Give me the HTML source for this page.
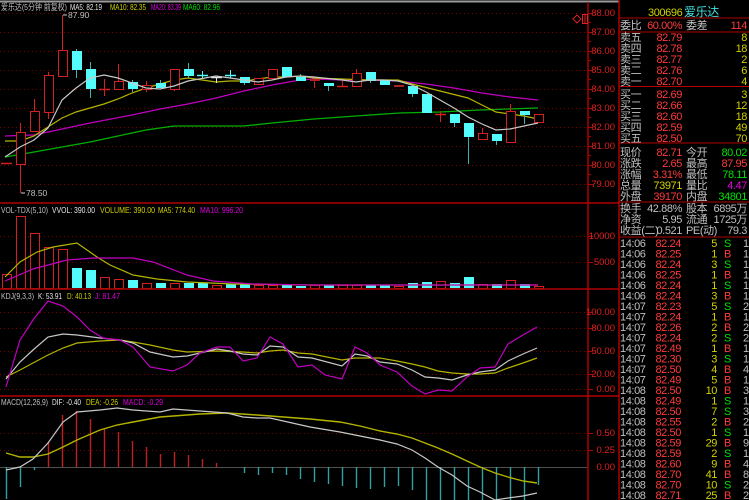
<!DOCTYPE html>
<html><head><meta charset="utf-8"><style>
html,body{margin:0;padding:0;background:#000;width:749px;height:500px;overflow:hidden}
svg{display:block}
text{font-family:"Liberation Sans","Noto Sans CJK SC",sans-serif}
.h{font-size:8.5px}
.ax{font-size:9.5px;fill:#e02020;text-anchor:end}
.p{font-size:11px;letter-spacing:-0.4px}
.e{text-anchor:end}
.g{fill:#c0c0c0}.r{fill:#ff3b3b}.y{fill:#d2d200}.gr{fill:#00e000}.m{fill:#e000e0}.c{fill:#40e0e0}.w{fill:#e8e8e8}
</style></head><body>
<svg id="s" width="749" height="500" xmlns="http://www.w3.org/2000/svg">
<line x1="0" y1="1.5" x2="619" y2="1.5" stroke="#9a9a9a" stroke-width="2"/>
<g id="grid" stroke="#7a0000" stroke-dasharray="1,3" stroke-width="1"></g>
<line x1="0" y1="467.5" x2="588" y2="467.5" stroke="#505050"/>
<g id="chart"></g>
<g stroke="#b00000" stroke-width="1.5">
<line x1="0" y1="203" x2="619" y2="203"/>
<line x1="0" y1="289" x2="619" y2="289"/>
<line x1="0" y1="396" x2="619" y2="396"/>
<line x1="588" y1="2" x2="588" y2="500"/>
<line x1="619" y1="0" x2="619" y2="500"/>
</g>
<g stroke="#b00000" id="ticks"></g>
<path d="M573 19 L577 15 L581 19 L577 23 Z" fill="none" stroke="#e02020"/>
<rect x="582.5" y="14.5" width="5" height="9" fill="none" stroke="#e02020"/>
<line x1="585" y1="15" x2="585" y2="23" stroke="#e02020"/>
<!-- headers -->
<g class="h">
<text x="1" y="10" class="g" textLength="66" lengthAdjust="spacingAndGlyphs">爱乐达(5分钟 前复权)</text>
<text x="70" y="10" class="w" textLength="32" lengthAdjust="spacingAndGlyphs">MA5: 82.19</text>
<text x="110" y="10" class="y" textLength="36" lengthAdjust="spacingAndGlyphs">MA10: 82.35</text>
<text x="151" y="10" class="m" textLength="30" lengthAdjust="spacingAndGlyphs">MA20: 83.39</text>
<text x="183" y="10" class="gr" textLength="37" lengthAdjust="spacingAndGlyphs">MA60: 82.96</text>
<text x="1" y="213" class="g" textLength="47" lengthAdjust="spacingAndGlyphs">VOL-TDX(5,10)</text>
<text x="52" y="213" class="w" textLength="43" lengthAdjust="spacingAndGlyphs">VVOL: 390.00</text>
<text x="100" y="213" class="y" textLength="55" lengthAdjust="spacingAndGlyphs">VOLUME: 390.00</text>
<text x="158" y="213" class="y" textLength="37" lengthAdjust="spacingAndGlyphs">MA5: 774.40</text>
<text x="200" y="213" class="m" textLength="43" lengthAdjust="spacingAndGlyphs">MA10: 996.20</text>
<text x="1" y="299" class="g" textLength="33" lengthAdjust="spacingAndGlyphs">KDJ(9,3,3)</text>
<text x="38" y="299" class="w" textLength="24" lengthAdjust="spacingAndGlyphs">K: 53.91</text>
<text x="67" y="299" class="y" textLength="24" lengthAdjust="spacingAndGlyphs">D: 40.13</text>
<text x="95" y="299" class="m" textLength="25" lengthAdjust="spacingAndGlyphs">J: 81.47</text>
<text x="1" y="405" class="g" textLength="47" lengthAdjust="spacingAndGlyphs">MACD(12,26,9)</text>
<text x="52" y="405" class="w" textLength="29" lengthAdjust="spacingAndGlyphs">DIF: -0.40</text>
<text x="86" y="405" class="y" textLength="32" lengthAdjust="spacingAndGlyphs">DEA: -0.26</text>
<text x="123" y="405" class="m" textLength="40" lengthAdjust="spacingAndGlyphs">MACD: -0.29</text>
</g>
<text class="h g" x="68" y="18">87.90</text>
<line x1="63" y1="15" x2="67" y2="15" stroke="#ccc"/>
<text class="h g" x="26" y="196">78.50</text>
<line x1="21" y1="193" x2="25" y2="193" stroke="#ccc"/>
<text class="ax" x="615" y="16">88.00</text><text class="ax" x="615" y="35">87.00</text><text class="ax" x="615" y="54">86.00</text><text class="ax" x="615" y="73">85.00</text><text class="ax" x="615" y="92">84.00</text><text class="ax" x="615" y="111">83.00</text><text class="ax" x="615" y="130">82.00</text><text class="ax" x="615" y="149">81.00</text><text class="ax" x="615" y="168">80.00</text><text class="ax" x="615" y="187">79.00</text>
<text class="ax" x="615" y="239">10000</text><text class="ax" x="615" y="265">5000</text>
<text class="ax" x="615" y="315">100.00</text><text class="ax" x="615" y="331">80.00</text><text class="ax" x="615" y="354">50.00</text><text class="ax" x="615" y="377">20.00</text><text class="ax" x="615" y="392">0.00</text>
<text class="ax" x="615" y="436">0.50</text><text class="ax" x="615" y="453">0.25</text><text class="ax" x="615" y="470">0.00</text>
<g stroke="#b00000" stroke-width="1">
<line x1="619" y1="18" x2="749" y2="18"/><line x1="619" y1="32" x2="749" y2="32"/><line x1="619" y1="86.5" x2="749" y2="86.5"/><line x1="619" y1="143" x2="749" y2="143"/><line x1="619" y1="202" x2="749" y2="202"/><line x1="619" y1="237" x2="749" y2="237"/>
</g>
<g class="p">
<text x="648" y="16" class="y">300696</text><text x="684" y="16" class="c" style="font-size:12px">爱乐达</text>
<text x="620" y="29" class="g">委比</text><text x="682" y="29" class="r e">60.00%</text><text x="686" y="29" class="g">委差</text><text x="747" y="29" class="r e">114</text>
<text x="620" y="156" class="g">现价</text><text x="682" y="156" class="r e">82.71</text><text x="686" y="156" class="g">今开</text><text x="747" y="156" class="gr e">80.02</text>
<text x="620" y="167" class="g">涨跌</text><text x="682" y="167" class="r e">2.65</text><text x="686" y="167" class="g">最高</text><text x="747" y="167" class="r e">87.95</text>
<text x="620" y="178" class="g">涨幅</text><text x="682" y="178" class="r e">3.31%</text><text x="686" y="178" class="g">最低</text><text x="747" y="178" class="gr e">78.11</text>
<text x="620" y="189" class="g">总量</text><text x="682" y="189" class="y e">73971</text><text x="686" y="189" class="g">量比</text><text x="747" y="189" class="m e">4.47</text>
<text x="620" y="200" class="g">外盘</text><text x="682" y="200" class="r e">39170</text><text x="686" y="200" class="g">内盘</text><text x="747" y="200" class="gr e">34801</text>
<text x="620" y="212" class="g">换手</text><text x="682" y="212" class="g e">42.88%</text><text x="686" y="212" class="g">股本</text><text x="747" y="212" class="g e">6895万</text>
<text x="620" y="223" class="g">净资</text><text x="682" y="223" class="g e">5.95</text><text x="686" y="223" class="g">流通</text><text x="747" y="223" class="g e">1725万</text>
<text x="620" y="234" class="g">收益(二)</text><text x="682" y="234" class="g e">0.521</text><text x="686" y="234" class="g">PE(动)</text><text x="747" y="234" class="g e">79.3</text>
<text x="620" y="41" class="g">卖五</text><text x="682" y="41" class="r e">82.79</text><text x="747" y="41" class="y e">8</text>
<text x="620" y="52" class="g">卖四</text><text x="682" y="52" class="r e">82.78</text><text x="747" y="52" class="y e">18</text>
<text x="620" y="63" class="g">卖三</text><text x="682" y="63" class="r e">82.77</text><text x="747" y="63" class="y e">2</text>
<text x="620" y="74" class="g">卖二</text><text x="682" y="74" class="r e">82.76</text><text x="747" y="74" class="y e">6</text>
<text x="620" y="85" class="g">卖一</text><text x="682" y="85" class="r e">82.70</text><text x="747" y="85" class="y e">4</text>
<text x="620" y="98" class="g">买一</text><text x="682" y="98" class="r e">82.69</text><text x="747" y="98" class="y e">3</text>
<text x="620" y="109" class="g">买二</text><text x="682" y="109" class="r e">82.66</text><text x="747" y="109" class="y e">12</text>
<text x="620" y="120" class="g">买三</text><text x="682" y="120" class="r e">82.60</text><text x="747" y="120" class="y e">18</text>
<text x="620" y="131" class="g">买四</text><text x="682" y="131" class="r e">82.59</text><text x="747" y="131" class="y e">49</text>
<text x="620" y="142" class="g">买五</text><text x="682" y="142" class="r e">82.50</text><text x="747" y="142" class="y e">70</text>
</g>
<g class="p">
<text x="620" y="247" class="g">14:06</text><text x="681" y="247" class="r e">82.24</text><text x="717" y="247" class="y e">5</text><text x="724" y="247" class="gr">S</text><text x="743" y="247" class="g">1</text>
<text x="620" y="257.5" class="g">14:06</text><text x="681" y="257.5" class="r e">82.25</text><text x="717" y="257.5" class="y e">1</text><text x="724" y="257.5" class="r">B</text><text x="743" y="257.5" class="g">1</text>
<text x="620" y="268" class="g">14:06</text><text x="681" y="268" class="r e">82.24</text><text x="717" y="268" class="y e">3</text><text x="724" y="268" class="gr">S</text><text x="743" y="268" class="g">1</text>
<text x="620" y="278.5" class="g">14:06</text><text x="681" y="278.5" class="r e">82.25</text><text x="717" y="278.5" class="y e">1</text><text x="724" y="278.5" class="r">B</text><text x="743" y="278.5" class="g">1</text>
<text x="620" y="289" class="g">14:06</text><text x="681" y="289" class="r e">82.24</text><text x="717" y="289" class="y e">1</text><text x="724" y="289" class="gr">S</text><text x="743" y="289" class="g">1</text>
<text x="620" y="299.5" class="g">14:06</text><text x="681" y="299.5" class="r e">82.24</text><text x="717" y="299.5" class="y e">3</text><text x="724" y="299.5" class="r">B</text><text x="743" y="299.5" class="g">1</text>
<text x="620" y="310" class="g">14:07</text><text x="681" y="310" class="r e">82.23</text><text x="717" y="310" class="y e">5</text><text x="724" y="310" class="gr">S</text><text x="743" y="310" class="g">2</text>
<text x="620" y="320.5" class="g">14:07</text><text x="681" y="320.5" class="r e">82.24</text><text x="717" y="320.5" class="y e">1</text><text x="724" y="320.5" class="r">B</text><text x="743" y="320.5" class="g">1</text>
<text x="620" y="331" class="g">14:07</text><text x="681" y="331" class="r e">82.26</text><text x="717" y="331" class="y e">2</text><text x="724" y="331" class="r">B</text><text x="743" y="331" class="g">2</text>
<text x="620" y="341.5" class="g">14:07</text><text x="681" y="341.5" class="r e">82.24</text><text x="717" y="341.5" class="y e">2</text><text x="724" y="341.5" class="gr">S</text><text x="743" y="341.5" class="g">2</text>
<text x="620" y="352" class="g">14:07</text><text x="681" y="352" class="r e">82.49</text><text x="717" y="352" class="y e">1</text><text x="724" y="352" class="r">B</text><text x="743" y="352" class="g">1</text>
<text x="620" y="362.5" class="g">14:07</text><text x="681" y="362.5" class="r e">82.30</text><text x="717" y="362.5" class="y e">3</text><text x="724" y="362.5" class="gr">S</text><text x="743" y="362.5" class="g">1</text>
<text x="620" y="373" class="g">14:07</text><text x="681" y="373" class="r e">82.50</text><text x="717" y="373" class="y e">4</text><text x="724" y="373" class="r">B</text><text x="743" y="373" class="g">4</text>
<text x="620" y="383.5" class="g">14:07</text><text x="681" y="383.5" class="r e">82.49</text><text x="717" y="383.5" class="y e">5</text><text x="724" y="383.5" class="r">B</text><text x="743" y="383.5" class="g">1</text>
<text x="620" y="394" class="g">14:08</text><text x="681" y="394" class="r e">82.50</text><text x="717" y="394" class="y e">10</text><text x="724" y="394" class="r">B</text><text x="743" y="394" class="g">3</text>
<text x="620" y="404.5" class="g">14:08</text><text x="681" y="404.5" class="r e">82.49</text><text x="717" y="404.5" class="y e">1</text><text x="724" y="404.5" class="gr">S</text><text x="743" y="404.5" class="g">1</text>
<text x="620" y="415" class="g">14:08</text><text x="681" y="415" class="r e">82.50</text><text x="717" y="415" class="y e">7</text><text x="724" y="415" class="gr">S</text><text x="743" y="415" class="g">3</text>
<text x="620" y="425.5" class="g">14:08</text><text x="681" y="425.5" class="r e">82.55</text><text x="717" y="425.5" class="y e">2</text><text x="724" y="425.5" class="r">B</text><text x="743" y="425.5" class="g">2</text>
<text x="620" y="436" class="g">14:08</text><text x="681" y="436" class="r e">82.50</text><text x="717" y="436" class="y e">1</text><text x="724" y="436" class="gr">S</text><text x="743" y="436" class="g">1</text>
<text x="620" y="446.5" class="g">14:08</text><text x="681" y="446.5" class="r e">82.59</text><text x="717" y="446.5" class="y e">29</text><text x="724" y="446.5" class="r">B</text><text x="743" y="446.5" class="g">9</text>
<text x="620" y="457" class="g">14:08</text><text x="681" y="457" class="r e">82.59</text><text x="717" y="457" class="y e">2</text><text x="724" y="457" class="gr">S</text><text x="743" y="457" class="g">1</text>
<text x="620" y="467.5" class="g">14:08</text><text x="681" y="467.5" class="r e">82.60</text><text x="717" y="467.5" class="y e">9</text><text x="724" y="467.5" class="r">B</text><text x="743" y="467.5" class="g">4</text>
<text x="620" y="478" class="g">14:08</text><text x="681" y="478" class="r e">82.70</text><text x="717" y="478" class="y e">41</text><text x="724" y="478" class="r">B</text><text x="743" y="478" class="g">8</text>
<text x="620" y="488.5" class="g">14:08</text><text x="681" y="488.5" class="r e">82.70</text><text x="717" y="488.5" class="y e">10</text><text x="724" y="488.5" class="gr">S</text><text x="743" y="488.5" class="g">2</text>
<text x="620" y="499" class="g">14:08</text><text x="681" y="499" class="r e">82.71</text><text x="717" y="499" class="y e">25</text><text x="724" y="499" class="r">B</text><text x="743" y="499" class="g">2</text>
</g>
</svg>
<script>
var NS="http://www.w3.org/2000/svg";
function el(p,t,a){var e=document.createElementNS(NS,t);for(var k in a)e.setAttribute(k,a[k]);p.appendChild(e);return e;}
var grid=document.getElementById('grid'),ch=document.getElementById('chart'),tk=document.getElementById('ticks');
[13,32,51,70,89,108,127,146,165,184,236,262,312,328,351,374,389,433,450].forEach(function(y){el(grid,'line',{x1:0,y1:y+.5,x2:588,y2:y+.5});el(tk,'line',{x1:588,y1:y+.5,x2:593,y2:y+.5});});
[22.5,41.5,60.5,79.5,98.5,117.5,136.5,155.5,174.5].forEach(function(y){el(tk,'line',{x1:588,y1:y,x2:591,y2:y});});
var RED="#d42020",CY="#54fcfc";
var C=[[6,163,163,163,163,'x'],[20,132,164,123,193,'r'],[34,111,131,99,131,'r'],[48,75,112,72,119,'r'],[62,50,76,15,76,'r'],[76,51,70,49,78,'c'],[90,69,89,62,98,'c'],[104,89,89,79,96,'x'],[118,81,89,64,89,'r'],[132,82,89,80,92,'c'],[146,85,89,81,92,'r'],[160,83,88,80,88,'c'],[174,69,89,69,91,'r'],[188,69,76,63,78,'c'],[202,75,75,71,79,'cx'],[216,77,77,77,83,'w'],[230,75,75,70,78,'cx'],[244,77,83,77,85,'c'],[258,78,84,78,84,'r'],[272,69,78,69,78,'r'],[286,67,77,67,77,'c'],[300,77,81,74,81,'c'],[314,79,81,79,88,'f'],[328,83,86,83,91,'c'],[342,86,86,81,86,'x'],[356,73,86,69,86,'r'],[370,72,81,72,83,'c'],[384,80,85,80,85,'c'],[398,85,87,85,87,'f'],[412,86,94,86,97,'c'],[426,94,113,94,113,'c'],[440,114,114,111,122,'x'],[454,114,123,114,127,'c'],[468,123,137,123,164,'c'],[482,133,139,128,139,'r'],[496,134,141,134,145,'c'],[510,111,142,104,142,'r'],[524,111,115,111,124,'c'],[538,114,122,114,122,'r']];
var V=[274,216,233,247,249,268,270,277,279,280,283,283,283,283,283,285,284,284,285,285,285,286,285,285,285,285,285,285,286,283,282,281,283,277,284,284,280,284,286];
function poly(pts,col,w){el(ch,'polyline',{points:pts.map(function(p){return p.join(',')}).join(' '),fill:'none',stroke:col,'stroke-width':w||1});}
poly([[5,136],[34,135],[48,132],[90,123],[132,115],[160,109],[188,104],[216,98],[244,91],[272,85],[300,80],[314,79],[342,80],[370,80],[398,81],[426,84],[454,88],[482,93],[510,97],[538,100]],'#c000c0',1.3);
poly([[5,157],[34,152],[62,147],[90,142],[118,136],[146,130],[174,126],[200,126],[244,126],[272,123],[314,119],[370,115],[400,113],[440,112],[480,110],[538,108]],'#00b000',1.3);
poly([[5,141],[20,141],[34,136],[48,127],[62,118],[76,112],[90,108],[104,104],[118,99],[132,93],[146,88],[160,84],[174,80],[188,78],[202,80],[216,82],[230,81],[244,81],[258,79],[272,77],[286,77],[300,76],[314,78],[342,79],[370,80],[384,80],[398,80],[412,84],[440,91],[468,98],[482,105],[496,112],[510,114],[524,116],[538,119]],'#b4b400',1.2);
C.forEach(function(c){var x=c[0],t=c[1],b=c[2],wt=c[3],wb=c[4],k=c[5];
 var col=(k=='c'||k=='cx')?CY:(k=='w'?'#e0e0e0':RED);
 el(ch,'line',{x1:x+.5,y1:wt,x2:x+.5,y2:wb,stroke:(k=='c'?'#40b0b0':col)});
 if(k=='c')el(ch,'rect',{x:x-4,y:t,width:10,height:Math.max(b-t,1),fill:CY});
 else if(k=='r')el(ch,'rect',{x:x-4+.5,y:t+.5,width:9,height:b-t,fill:'#000',stroke:RED});
 else if(k=='f')el(ch,'rect',{x:x-4,y:t,width:10,height:Math.max(b-t,2),fill:'#b02020'});
 else el(ch,'line',{x1:x-5,y1:t+.5,x2:x+6,y2:t+.5,stroke:col,'stroke-width':1.5});
});
poly([[5,157],[20,147],[34,140],[48,128],[62,100],[76,88],[90,78],[104,75],[118,78],[132,83],[146,88],[160,89],[174,86],[188,81],[216,76],[244,80],[258,82],[272,80],[286,77],[300,76],[314,77],[342,80],[356,82],[370,80],[384,80],[398,81],[412,85],[426,92],[440,100],[454,108],[468,117],[482,124],[496,130],[510,129],[524,126],[538,123]],'#c8c8c8',1.2);
C.forEach(function(c,i){var x=c[0],t=V[i],k=c[5];
 if(k=='c'||k=='cx')el(ch,'rect',{x:x-4,y:t,width:10,height:288-t,fill:CY});
 else el(ch,'rect',{x:x-4+.5,y:t+.5,width:9,height:288-t,fill:'#000',stroke:RED});});
poly([[5,277],[20,262],[37,252],[53,247],[77,243],[97,257],[110,265],[133,275],[157,279],[187,282],[233,284],[310,285],[400,285],[538,285]],'#b4b400',1.2);
poly([[5,281],[33,269],[67,260],[93,258],[133,258],[153,262],[187,275],[213,281],[253,284],[310,285],[420,285],[538,285]],'#c000c0',1.2);
poly([[6,377],[20,370],[33,363],[48,355],[63,348],[77,343],[100,341],[120,340],[133,342],[150,345],[173,350],[187,352],[217,351],[243,352],[257,353],[270,351],[283,350],[298,353],[312,354],[342,360],[355,358],[367,358],[380,358],[397,361],[412,364],[425,367],[438,371],[452,373],[467,374],[480,374],[495,373],[508,368],[523,363],[537,358]],'#b4b400',1.2);
poly([[6,379],[20,362],[33,350],[48,337],[63,334],[77,335],[100,338],[120,340],[133,343],[150,352],[173,357],[187,356],[217,349],[230,351],[243,354],[257,355],[270,346],[283,347],[298,357],[312,358],[342,366],[355,354],[367,356],[380,362],[397,364],[412,370],[425,377],[438,378],[452,380],[467,375],[480,372],[495,370],[508,361],[523,354],[537,348]],'#c8c8c8',1.2);
poly([[6,387],[20,340],[33,320],[48,301],[63,306],[77,317],[90,330],[103,338],[120,340],[133,347],[150,367],[173,371],[187,365],[200,353],[217,347],[230,347],[243,361],[257,358],[270,337],[283,344],[298,367],[312,365],[325,375],[342,379],[355,347],[367,353],[380,365],[397,372],[412,386],[425,394],[438,390],[452,391],[467,377],[480,368],[495,367],[508,344],[523,335],[537,327]],'#c000c0',1.2);
var M=[499,487,470,442,415,411,419,428,432,441,447,454,452,455,459,463,467,473,475,473,475,479,482,484,486,488,489,487,486,490,500,500,500,500,500,500,500,500,485];
C.forEach(function(c,i){var y=M[i];if(y==null||y==467)return;el(ch,'line',{x1:c[0]+.5,y1:467,x2:c[0]+.5,y2:y,stroke:y<467?'#c02020':'#30a0a0','stroke-width':1.4});});
poly([[6,453],[20,457],[33,457],[48,454],[63,447],[77,440],[100,430],[117,425],[133,422],[160,417],[200,414],[227,413],[257,415],[310,419],[340,422],[360,426],[380,431],[397,434],[412,438],[425,443],[438,448],[452,454],[467,461],[480,467],[495,473],[508,477],[523,481],[537,483]],'#b4b400',1.4);
poly([[6,470],[20,467],[33,459],[48,443],[63,422],[77,412],[100,410],[117,408],[133,410],[160,412],[173,409],[200,411],[227,413],[243,417],[257,418],[270,418],[310,427],[340,432],[360,436],[380,440],[397,444],[412,450],[425,458],[438,467],[452,475],[467,486],[480,492],[495,500],[508,498],[523,496],[537,493]],'#c8c8c8',1.2);
</script>
</body></html>
